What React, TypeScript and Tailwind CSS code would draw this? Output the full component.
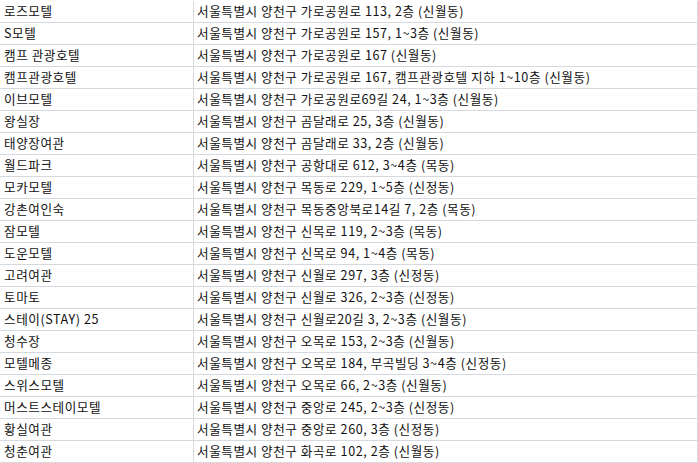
const rows: [string, string][] = [
  ["로즈모텔", "서울특별시 양천구 가로공원로 113, 2층 (신월동)"],
  ["S모텔", "서울특별시 양천구 가로공원로 157, 1~3층 (신월동)"],
  ["캠프 관광호텔", "서울특별시 양천구 가로공원로 167 (신월동)"],
  ["캠프관광호텔", "서울특별시 양천구 가로공원로 167, 캠프관광호텔 지하 1~10층 (신월동)"],
  ["이브모텔", "서울특별시 양천구 가로공원로69길 24, 1~3층 (신월동)"],
  ["왕실장", "서울특별시 양천구 곰달래로 25, 3층 (신월동)"],
  ["태양장여관", "서울특별시 양천구 곰달래로 33, 2층 (신월동)"],
  ["월드파크", "서울특별시 양천구 공항대로 612, 3~4층 (목동)"],
  ["모카모텔", "서울특별시 양천구 목동로 229, 1~5층 (신정동)"],
  ["강촌여인숙", "서울특별시 양천구 목동중앙북로14길 7, 2층 (목동)"],
  ["잠모텔", "서울특별시 양천구 신목로 119, 2~3층 (목동)"],
  ["도운모텔", "서울특별시 양천구 신목로 94, 1~4층 (목동)"],
  ["고려여관", "서울특별시 양천구 신월로 297, 3층 (신정동)"],
  ["토마토", "서울특별시 양천구 신월로 326, 2~3층 (신정동)"],
  ["스테이(STAY) 25", "서울특별시 양천구 신월로20길 3, 2~3층 (신월동)"],
  ["청수장", "서울특별시 양천구 오목로 153, 2~3층 (신월동)"],
  ["모텔메종", "서울특별시 양천구 오목로 184, 부곡빌딩 3~4층 (신정동)"],
  ["스위스모텔", "서울특별시 양천구 오목로 66, 2~3층 (신월동)"],
  ["머스트스테이모텔", "서울특별시 양천구 중앙로 245, 2~3층 (신정동)"],
  ["황실여관", "서울특별시 양천구 중앙로 260, 3층 (신정동)"],
  ["청춘여관", "서울특별시 양천구 화곡로 102, 2층 (신월동)"],
];

export default function App() {
  return (
    <div
      className="w-[698px] h-[463px] overflow-hidden bg-white pt-px text-[12.6px] tracking-[0.55px] text-[#111]"
      style={{ fontFamily: '"Malgun Gothic", "Noto Sans CJK KR", sans-serif' }}
    >
      <div className="border-r border-[#d6d9dd]">
        {rows.map(([name, addr]) => (
          <div key={name} className="flex h-[22px] border-b border-[#d6d9dd]">
            <div className="w-[194px] shrink-0 border-r border-[#d6d9dd] pl-1 flex items-center whitespace-nowrap">
              {name}
            </div>
            <div className="flex-1 pl-[3px] flex items-center whitespace-nowrap">{addr}</div>
          </div>
        ))}
      </div>
    </div>
  );
}
